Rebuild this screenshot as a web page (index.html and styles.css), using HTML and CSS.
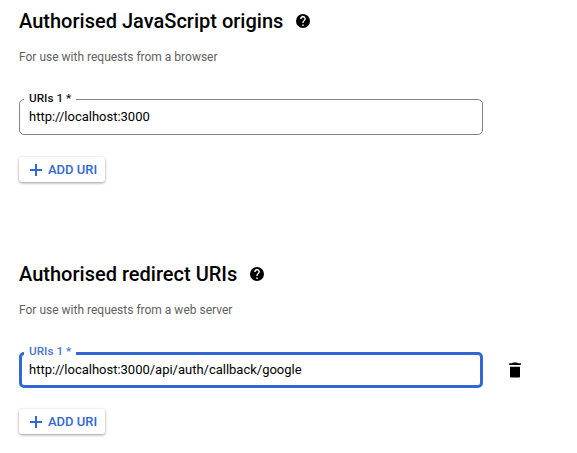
FILE: index.html
```html
<!DOCTYPE html>
<html lang="en">
<head>
<meta charset="utf-8">
<title>OAuth client</title>
<link rel="stylesheet" href="styles.css">
</head>
<body>
<section class="group">
  <h2 class="title">Authorised JavaScript origins
    <svg class="help" viewBox="2 2 20 20"><path d="M12 2a10 10 0 1 0 0 20 10 10 0 0 0 0-20zm1 17h-2v-2h2v2zm2.070-7.750-.9.920C13.450 12.900 13 13.500 13 15h-2v-.5c0-1.100.45-2.100 1.170-2.830l1.240-1.260A2 2 0 1 0 10 9H8a4 4 0 1 1 7.070 2.250z"/></svg>
  </h2>
  <p class="hint">For use with requests from a browser</p>
  <div class="row">
    <div class="field"><span class="label">URIs 1 *</span><span class="value">http://localhost:3000</span></div>
  </div>
  <button class="add"><svg viewBox="0 0 12 12"><path d="M5 0h2v5h5v2H7v5H5V7H0V5h5z"/></svg>ADD URI</button>
</section>
<section class="group">
  <h2 class="title">Authorised redirect URIs
    <svg class="help" viewBox="2 2 20 20"><path d="M12 2a10 10 0 1 0 0 20 10 10 0 0 0 0-20zm1 17h-2v-2h2v2zm2.070-7.750-.9.920C13.450 12.900 13 13.500 13 15h-2v-.5c0-1.100.45-2.100 1.170-2.830l1.240-1.260A2 2 0 1 0 10 9H8a4 4 0 1 1 7.070 2.250z"/></svg>
  </h2>
  <p class="hint">For use with requests from a web server</p>
  <div class="row">
    <div class="field focused"><span class="label">URIs 1 *</span><span class="value">http://localhost:3000/api/auth/callback/google</span></div>
    <svg class="trash" viewBox="0 0 24 24"><path d="M6 20c0 .6.5 1 1 1h10c.5 0 1-.4 1-1V8H6v12zM19 4h-3.500l-1-1h-5l-1 1H5v2h14V4z"/></svg>
  </div>
  <button class="add"><svg viewBox="0 0 12 12"><path d="M5 0h2v5h5v2H7v5H5V7H0V5h5z"/></svg>ADD URI</button>
</section>
</body>
</html>
```

FILE: styles.css
```css
* { box-sizing: border-box; }
body { margin: 0; min-height: 453px; padding: 9px 19px 0; background: #fff; color: #000; font-family: Roboto, sans-serif; }
.group { height: 253px; }
.group:last-child { height: auto; }
.title { display: flex; align-items: center; gap: 13px; margin: 0; height: 24px; font-size: 20px; font-weight: 500; line-height: 24px; letter-spacing: .01px; white-space: nowrap; }
.help { width: 14px; height: 14px; }
.hint { margin: 16px 0 0; font-size: 12px; line-height: 16px; color: #5f5f5f; }
.row { display: flex; align-items: center; gap: 22px; margin-top: 34px; }
.field { position: relative; width: 464px; height: 36px; padding: 0 9px; border: 1px solid #80838d; border-radius: 5px; }
.value { font-size: 13px; line-height: 34px; letter-spacing: -.01px; }
.label { position: absolute; top: -9px; left: 4px; width: 52px; padding: 0 0 0 5px; background: #fff; font-size: 11.75px; font-weight: 500; line-height: 14px; color: #111; white-space: nowrap; }
.focused { padding: 0 7px; border: 3px solid #3367d6; }
.focused .value { line-height: 30px; }
.focused .label { top: -11px; left: 2px; color: #4a73d6; }
.trash { width: 20px; height: 20px; }
.add { display: flex; align-items: center; gap: 6px; width: 86px; height: 25px; margin-top: 22px; padding: 0 0 0 11px; border: 0; border-radius: 3px; background: #fff; box-shadow: 0 1px 3px rgba(0,0,0,.4); color: #3367d6; font: 500 13px/25px Roboto, sans-serif; white-space: nowrap; }
.group:last-child .add { margin-top: 21px; }
.add svg { width: 12px; height: 12px; fill: currentColor; }
```
